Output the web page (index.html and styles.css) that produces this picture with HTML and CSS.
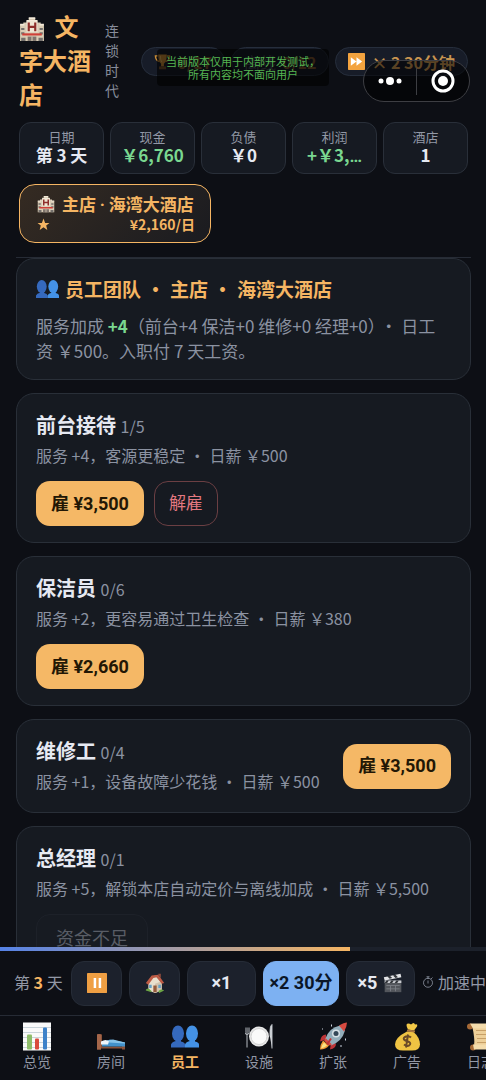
FILE: index.html
```html
<!DOCTYPE html>
<html lang="zh-CN">
<head>
<meta charset="utf-8">
<meta name="viewport" content="width=device-width, initial-scale=1">
<title>文字大酒店</title>
<link rel="stylesheet" href="styles.css">
</head>
<body>
<svg class="sprite" aria-hidden="true">
  <symbol id="hotel" viewBox="0 0 24 24">
    <path d="M1 8h3V6h3V4h2V2h6v2h2v2h3v2h3v15H1z" fill="#d9ccb5"/>
    <path d="M1 8h4M19 8h4M7 4.500h10M9 2h6" stroke="#f3ead9" stroke-width="1.500"/>
    <path d="M2 11h3v2H2zM2 15h3v2H2zM19 11h3v2h-3zM19 15h3v2h-3zM2 20h4v3H2zM18 20h4v3h-4z" fill="#74706d"/>
    <path d="M7 5h10v10H7z" fill="#efe5d3"/>
    <path d="M9 6v8M15 6v8M9 10h6" stroke="#8e2f2b" stroke-width="2" fill="none"/>
    <path d="M3 16h18v2H3z" fill="#cf4038"/>
    <path d="M8 19h8v4H8z" fill="#7e736c"/><path d="M12 19v4" stroke="#d9ccb5"/>
  </symbol>
  <symbol id="people" viewBox="0 0 28 24">
    <g fill="#3569bd"><ellipse cx="7" cy="9" rx="6" ry="8"/><path d="M0 23v-3q1-3 5-3.500V14h5v3q4 1 4 3v3z"/></g>
    <g fill="#4492e6"><ellipse cx="21" cy="9" rx="6" ry="8"/><path d="M14 23v-3q1-3 5-3.500V14h5v3q4 1 4 3v3z"/></g>
  </symbol>
  <symbol id="trophy" viewBox="0 0 24 24">
    <path d="M6 4H2q0 7 6 8M18 4h4q0 7-6 8" fill="none" stroke="#c78a35" stroke-width="2"/>
    <path d="M6 2h12q0 10-4 13v4h-4v-4Q6 12 6 2z" fill="#c78a35"/><path d="M7 19h10v4H7z" fill="#76502b"/>
    <path d="M9 4q0 6 2 9" stroke="#efc36b" fill="none"/>
  </symbol>
  <symbol id="forward" viewBox="0 0 24 24">
    <rect width="24" height="24" rx="1" fill="#f3a33f"/><path d="M4 6l8 6-8 6zM12 6l8 6-8 6z" fill="#fff"/>
  </symbol>
  <symbol id="pause" viewBox="0 0 24 24">
    <rect width="24" height="24" rx="1" fill="#ef9f43"/><path d="M8 6h3v12H8zM14 6h3v12h-3z" fill="#fff"/>
  </symbol>
  <symbol id="star" viewBox="0 0 24 24"><path d="M12 1l3 8h8l-6 5 2 8-7-5-7 5 2-8-6-5h8z" fill="#f5b563"/></symbol>
  <symbol id="house" viewBox="0 0 24 24">
    <path d="M4 10l8-7 8 8v10l-8 3-8-3z" fill="#e9dfcd"/><path d="M12 13l8-3v11l-8 3z" fill="#d3c3ae"/>
    <path d="M1 12l7-9 8-1 7 10-3 1-6-8-4 1-6 8z" fill="#bd5b45"/><path d="M16 1h3v5l-3-3z" fill="#8c4a3d"/>
    <path d="M10 15h4v8h-4z" fill="#955b3d"/><path d="M5 14h3v4H5zM16 14h3v4h-3z" fill="#64a0c4"/>
    <path d="M1 20q3-3 5 0 2 1 2 3l-7-2zM16 22q3-4 7-1l-6 3z" fill="#6da545"/>
  </symbol>
  <symbol id="clapper" viewBox="0 0 24 24">
    <path d="M2 9h20v14H2z" fill="#53565c"/><path d="M2 9h20v3H2z" fill="#c9cbd0"/>
    <path d="M4 9l-2 3h3l2-3zM10 9l-2 3h3l2-3zM16 9l-2 3h3l2-3z" fill="#33363b"/>
    <path d="M1 5l20-4 1 4L2 9z" fill="#e3e4e7"/><path d="M5 4l3 3 3-1-3-3zM12 3l3 3 3-1-3-3z" fill="#33363b"/>
    <path d="M4 15h16M4 19h16M9 15v7M15 15v7" stroke="#7d8188"/>
  </symbol>
  <symbol id="timer" viewBox="0 0 16 16">
    <circle cx="8" cy="9" r="6" fill="none" stroke="#99a0af"/><path d="M6 1h4M8 1v3M8 6v4M12 4l2-2" stroke="#99a0af" fill="none"/>
  </symbol>
  <symbol id="chart" viewBox="0 0 28 28">
    <path d="M0 0h28v28H0z" fill="#fafafa"/><path d="M0 5h28M0 10h28M0 15h28M0 20h28M0 25h28" stroke="#c9d3d9"/>
    <rect x="4" y="12" width="5" height="15" rx="1" fill="#8fbd6b"/><rect x="12" y="16" width="4" height="11" rx="1" fill="#d94b3e"/><rect x="20" y="5" width="4" height="22" rx="1" fill="#3e82c9"/>
  </symbol>
  <symbol id="bed" viewBox="0 0 28 28">
    <path d="M0 12q2-1 5 0v12h20v-3h3v6h-3v-1H4v1H0z" fill="#8a533a"/><path d="M0 12q2-1 4 0v15H0z" fill="#a4664a"/>
    <path d="M5 20l8-3 15 3v4H5z" fill="#4292cb"/><path d="M10 18l6-1 12 3v1l-16-1z" fill="#86c3e8"/>
    <path d="M4 19q5-3 8 0l-1 3H4z" fill="#eef5fa"/>
  </symbol>
  <symbol id="dining" viewBox="0 0 28 28">
    <circle cx="14" cy="14" r="10" fill="#e7e7e7"/><circle cx="14" cy="14" r="8" fill="#fafafa" stroke="#d2d2d2"/>
    <path d="M0 5v5q0 2 2 2v13M2 5v7M4 5v5q0 2-2 2" stroke="#b8bdc3" fill="none"/><path d="M25 14V8q0-5 2-6v24" fill="#dfe2e5" stroke="#b8bdc3"/>
  </symbol>
  <symbol id="rocket" viewBox="0 0 28 28">
    <path d="M7 12q-5 0-6 7l6-2zM17 21q0 5-6 6l1-7z" fill="#bd3437"/>
    <path d="M4 18q-3 4-3 9 6 0 9-4z" fill="#f09b35"/><path d="M5 20q-2 2-3 6 4-1 6-3z" fill="#fae183"/>
    <path d="M6 17Q10 5 21 3l5 5q-3 11-14 15z" fill="#93adba"/>
    <path d="M20 3q5-3 8-3 0 4-3 9z" fill="#d74a40"/><path d="M7 16l6 6-3 1-5-5z" fill="#d74a40"/>
    <circle cx="17" cy="11" r="4" fill="#d7e1e6"/><circle cx="17" cy="11" r="2.500" fill="#344858"/>
    <path d="M12 16l-4 6" stroke="#bd3437" stroke-width="2"/>
    <path d="M12 2h1v2h-1zM3 6h1v1H3zM26 16h1v2h-1zM21 23h2v1h-2z" fill="#cbd4df"/>
  </symbol>
  <symbol id="money" viewBox="0 0 28 28">
    <path d="M15 7Q12 1 15 1q2 0 3 1 3-3 4 0 3-1 2 2l-3 4z" fill="#f3c947"/>
    <path d="M14 9q-12 6-12 13 0 6 8 6h9q8 0 8-6 0-7-7-13z" fill="#efc343"/><path d="M14 8l8 1" stroke="#a9763e" stroke-width="2"/>
    <path d="M18 15q-2-2-5-1-3 1-2 3 1 1 4 2 3 1 2 3-2 3-6 0M15 12l-2 13" stroke="#6a4a28" stroke-width="2" fill="none"/>
  </symbol>
  <symbol id="scroll" viewBox="0 0 28 28">
    <path d="M4 2h20q-2 3-1 12t2 12H6q2-3 1-12T4 2z" fill="#edcf98"/><path d="M9 8h12M9 12h12M10 16h12M10 20h12" stroke="#c79f67"/>
    <circle cx="3" cy="4" r="3" fill="#a56936"/><circle cx="6" cy="25" r="3" fill="#a56936"/><path d="M3 1h20q3 1 2 5H6zM6 22h19q3 1 1 5H7z" fill="#f4dcac"/>
  </symbol>
</svg>

<div class="app">
  <header class="header">
    <div class="brand">
      <h1 class="title"><svg class="icon title-icon"><use href="#hotel"/></svg> 文字大酒店</h1>
      <p class="subtitle">连锁时代</p>
      <div class="pills">
        <span class="pill pill-dim"><svg class="icon pill-icon"><use href="#trophy"/></svg><b>0/17</b></span>
        <span class="pill pill-dim">离线 <b>0/12</b></span>
        <span class="pill"><svg class="icon pill-icon"><use href="#forward"/></svg><b>× 2 30分钟</b></span>
      </div>
    </div>
    <dl class="stats">
      <div class="stat"><dt>日期</dt><dd>第 3 天</dd></div>
      <div class="stat"><dt>现金</dt><dd class="good">￥6,760</dd></div>
      <div class="stat"><dt>负债</dt><dd>￥0</dd></div>
      <div class="stat"><dt>利润</dt><dd class="good">+￥3,<span class="ellipsis">…</span></dd></div>
      <div class="stat"><dt>酒店</dt><dd>1</dd></div>
    </dl>
    <button class="branch" type="button">
      <span class="branch-name"><svg class="icon branch-icon"><use href="#hotel"/></svg><span>主店 <span class="thin-dot">·</span> 海湾大酒店</span></span>
      <span class="branch-meta"><svg class="icon star-icon"><use href="#star"/></svg><span>¥2,160/日</span></span>
    </button>
  </header>

  <main class="content">
    <section class="card summary">
      <h2 class="summary-title"><svg class="icon people-icon"><use href="#people"/></svg>员工团队<span class="dot">·</span>主店<span class="dot">·</span>海湾大酒店</h2>
      <p class="summary-text">服务加成 <b class="good">+4</b>（前台+4 保洁+0 维修+0 经理+0）<span class="dot">·</span>日工资 ￥500。入职付 7 天工资。</p>
    </section>
    <section class="card role">
      <div class="info"><h3 class="role-title">前台接待 <small>1/5</small></h3><p class="desc">服务 +4，客源更稳定<span class="dot">·</span>日薪 ￥500</p></div>
      <div class="actions"><button class="btn hire" type="button">雇 ¥3,500</button><button class="btn fire" type="button">解雇</button></div>
    </section>
    <section class="card role">
      <div class="info"><h3 class="role-title">保洁员 <small>0/6</small></h3><p class="desc">服务 +2，更容易通过卫生检查<span class="dot">·</span>日薪 ￥380</p></div>
      <div class="actions"><button class="btn hire" type="button">雇 ¥2,660</button></div>
    </section>
    <section class="card role">
      <div class="info"><h3 class="role-title">维修工 <small>0/4</small></h3><p class="desc">服务 +1，设备故障少花钱<span class="dot">·</span>日薪 ￥500</p></div>
      <div class="actions"><button class="btn hire" type="button">雇 ¥3,500</button></div>
    </section>
    <section class="card role">
      <div class="info"><h3 class="role-title">总经理 <small>0/1</small></h3><p class="desc">服务 +5，解锁本店自动定价与离线加成<span class="dot">·</span>日薪 ￥5,500</p></div>
      <div class="actions"><button class="btn poor" type="button" disabled>资金不足</button></div>
    </section>
  </main>

  <footer class="footer">
    <div class="progress"><div class="progress-fill" style="width:72%"></div></div>
    <div class="controls">
      <span class="day">第 <b>3</b> 天</span>
      <button class="ctl" type="button" aria-label="暂停"><svg class="icon ctl-icon"><use href="#pause"/></svg></button>
      <button class="ctl" type="button" aria-label="主页"><svg class="icon ctl-icon"><use href="#house"/></svg></button>
      <button class="ctl ctl-wide" type="button">×1</button>
      <button class="ctl ctl-active" type="button">×2 30分</button>
      <button class="ctl ctl-wide" type="button">×5 <svg class="icon ctl-icon"><use href="#clapper"/></svg></button>
      <span class="status"><svg class="icon timer-icon"><use href="#timer"/></svg>加速中</span>
    </div>
    <nav class="tabs">
      <button class="tab" type="button"><svg class="icon tab-icon"><use href="#chart"/></svg>总览</button>
      <button class="tab" type="button"><svg class="icon tab-icon"><use href="#bed"/></svg>房间</button>
      <button class="tab tab-active" type="button"><svg class="icon tab-icon"><use href="#people"/></svg>员工</button>
      <button class="tab" type="button"><svg class="icon tab-icon"><use href="#dining"/></svg>设施</button>
      <button class="tab" type="button"><svg class="icon tab-icon"><use href="#rocket"/></svg>扩张</button>
      <button class="tab" type="button"><svg class="icon tab-icon"><use href="#money"/></svg>广告</button>
      <button class="tab" type="button"><svg class="icon tab-icon"><use href="#scroll"/></svg>日志</button>
    </nav>
  </footer>

  <p class="notice">当前版本仅用于内部开发测试，<br>所有内容均不面向用户</p>
  <div class="capsule">
    <button class="capsule-btn" type="button" aria-label="更多"><svg class="icon more-icon" viewBox="0 0 24 10" fill="#fff"><circle cx="3" cy="5" r="2.500"/><circle cx="12" cy="5" r="4"/><circle cx="21" cy="5" r="2.500"/></svg></button>
    <button class="capsule-btn" type="button" aria-label="关闭"><svg class="icon close-icon" viewBox="0 0 24 24"><circle cx="12" cy="12" r="10" fill="none" stroke="#fff" stroke-width="3"/><circle cx="12" cy="12" r="5" fill="#fff"/></svg></button>
  </div>
</div>
</body>
</html>
```
FILE: styles.css
```css
* { box-sizing: border-box; }
body { margin: 0; background: #0d0f15; color: #e6e9f2; font-family: "Noto Sans CJK SC", sans-serif; }
button { margin: 0; font-family: inherit; color: inherit; cursor: pointer; }
h1, h2, h3, p, dl, dd { margin: 0; }
.sprite { position: absolute; width: 0; height: 0; }
.icon { flex: none; vertical-align: middle; }
.good { color: #7ad790; }
.app { position: relative; display: flex; flex-direction: column; height: 100vh; overflow: hidden; }

.header { flex: none; margin: 0 15px 0 16px; padding: 9px 3px 14px; border-bottom: 1px solid #262b35; }
.brand { display: flex; align-items: center; gap: 13px; }
.title { flex: 0 0 73px; color: #f5b563; font-size: 24px; line-height: 34px; }
.title-icon { width: 26px; height: 26px; margin-right: 4px; }
.subtitle { flex: 0 0 14px; color: #878d9b; font-size: 14px; line-height: 20px; }
.pills { flex: 1; display: flex; justify-content: flex-end; gap: 6px; padding-top: 3px; }
.pill { display: flex; align-items: center; gap: 6px; height: 29px; padding: 0 12px; border: 1px solid #262e3c; border-radius: 15px; background: #171c28; color: #8f96a5; font-size: 16px; white-space: nowrap; }
.pill b { color: #c89450; }
.pill-dim { color: #4a4e58; }
.pill-dim b { color: #805730; }
.pill-icon { width: 17px; height: 17px; }

.stats { display: grid; grid-template-columns: repeat(5, 1fr); gap: 6px; margin-top: 11px; }
.stat { height: 52px; padding: 4px 6px; border: 1px solid #292f39; border-radius: 12px; background: #161a22; text-align: center; white-space: nowrap; }
.stat dt { color: #9298a6; font-size: 13px; line-height: 19px; }
.stat dd { font-size: 17px; font-weight: 700; line-height: 18px; }
.ellipsis { font-family: Roboto, sans-serif; }
.branch { display: flex; flex-direction: column; width: 192px; margin-top: 10px; padding: 7px 15px 7px 17px; border: 1px solid #f5b563; border-radius: 16px; background: linear-gradient(135deg, #352b22, #1a1b20); color: #f5b563; font-weight: 700; }
.branch-name { display: flex; align-items: center; gap: 7px; font-size: 17px; line-height: 24px; white-space: nowrap; }
.branch-icon { width: 18px; height: 18px; }
.branch-meta { display: flex; align-items: center; justify-content: space-between; align-self: stretch; padding-bottom: 2px; font-size: 14px; line-height: 17px; }
.branch-meta > span { line-height: 17px; }
.thin-dot { font-family: Roboto, sans-serif; line-height: 20px; }
.star-icon { width: 13px; height: 13px; }

.content { flex: 1; min-height: 0; overflow: hidden; display: flex; flex-direction: column; gap: 13px; padding: 0 15px 0 16px; }
.card { flex: none; padding: 16px 19px; border: 1px solid #292f38; border-radius: 18px; background: #161a21; }
.dot { padding: 0 4px; }
.summary-title { display: flex; align-items: center; color: #f5b563; font-size: 19px; line-height: 28px; }
.summary-title .dot { padding: 0 5px; }
.people-icon { width: 23px; height: 20px; margin-right: 6px; }
.summary-text { margin-top: 10px; color: #8b92a1; font-size: 17px; line-height: 25px; }
.role { display: flex; flex-wrap: wrap; align-items: center; justify-content: space-between; gap: 11px; }
.role-title { font-size: 20px; line-height: 30px; }
.role-title small { color: #8b92a1; font-size: 16px; font-weight: 400; line-height: 20px; }
.desc { margin: 2px 0; color: #8b92a1; font-size: 16px; line-height: 26px; }
.actions { display: flex; gap: 10px; }
.btn { height: 45px; padding: 0 14px 4px; border: 1px solid transparent; border-radius: 14px; font-size: 17px; white-space: nowrap; }
.hire { background: #f5b866; color: #221705; font-weight: 700; font-family: Roboto, "Noto Sans CJK SC", sans-serif; font-size: 18px; }
.fire { border-color: #6b3f43; background: transparent; color: #e37880; }
.poor { height: 50px; padding: 0 19px 4px; border-color: #1d2129; background: #171b22; color: #595d66; font-size: 18px; }

.footer { flex: none; background: #0d0f15; }
.progress { height: 4px; background: #1c212b; }
.progress-fill { height: 100%; background: linear-gradient(90deg, #5582e6, #f5b563); }
.controls { display: flex; align-items: center; gap: 7px; padding: 10px 0 9px 14px; overflow: hidden; white-space: nowrap; }
.day { flex: none; width: 50px; padding-bottom: 3px; color: #9298a6; font-size: 16px; }
.day b { color: #f5b563; }
.ctl { flex: none; display: flex; align-items: center; justify-content: center; gap: 6px; width: 51px; height: 45px; padding: 0 0 2px; border: 1px solid #262c37; border-radius: 13px; background: #1c212c; font-size: 18px; font-weight: 700; font-family: Roboto, "Noto Sans CJK SC", sans-serif; }
.ctl-icon { width: 20px; height: 20px; }
.ctl-wide { width: 69px; }
.ctl-active { width: 76px; padding-bottom: 5px; border-color: #7db1f2; background: #7db1f2; color: #0b1728; }
.status { flex: none; display: flex; align-items: center; gap: 4px; padding-bottom: 3px; color: #9298a6; font-size: 16px; }
.timer-icon { width: 12px; height: 14px; }
.tabs { display: flex; height: 65px; overflow: hidden; border-top: 1px solid #262b35; }
.tab { flex: 0 0 74px; display: flex; flex-direction: column; align-items: center; padding: 6px 0 0; border: 0; background: none; color: #9298a6; font-size: 14px; line-height: 20px; }
.tab-icon { width: 28px; height: 29px; }
.tab-active { color: #f5b563; font-weight: 700; }

.notice { position: absolute; top: 49px; left: 157px; width: 172px; padding: 6px 0 5px; border-radius: 4px; background: rgba(0, 0, 0, .6); color: #55b552; font-size: 11px; line-height: 13px; text-align: center; white-space: nowrap; }
.capsule { position: absolute; top: 60px; right: 16px; display: flex; align-items: center; width: 107px; height: 42px; border: 1px solid #3d3e43; border-radius: 21px; background: rgba(0, 0, 0, .55); }
.capsule-btn { flex: 1; display: flex; align-items: center; justify-content: center; height: 27px; padding: 0; border: 0; background: none; }
.capsule-btn + .capsule-btn { border-left: 1px solid #3d3e43; }
.more-icon { width: 24px; height: 10px; }
.close-icon { width: 24px; height: 24px; }
```
